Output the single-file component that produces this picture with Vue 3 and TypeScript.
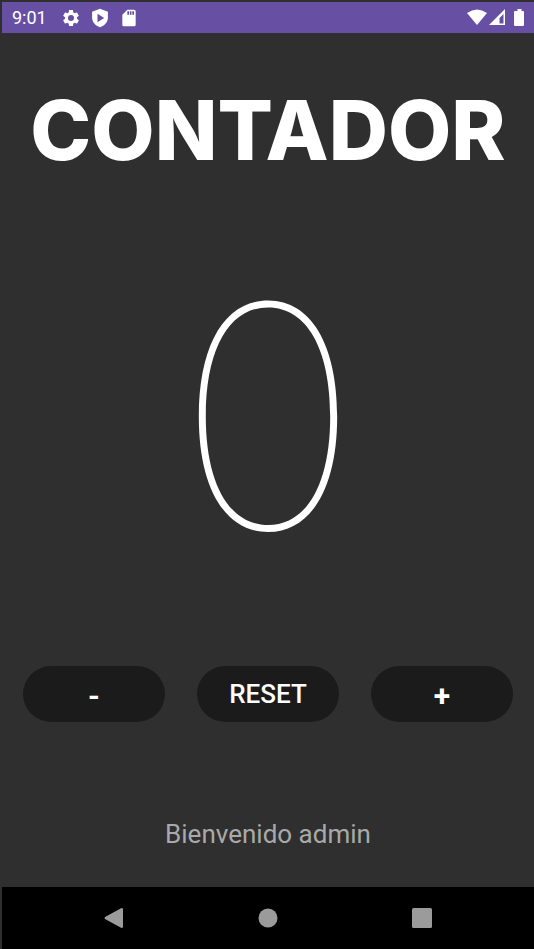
<script setup lang="ts">
import { ref } from 'vue'

const count = ref<number>(0)
const user = 'admin'
</script>

<template>
  <div class="device">
    <header class="status">
      <span class="clock">9:01</span>
      <svg class="icon" viewBox="0 0 24 24" aria-hidden="true">
        <path d="M19.14 12.94c.04-.3.06-.61.06-.94 0-.32-.02-.64-.07-.94l2.03-1.58a.49.49 0 0 0 .12-.61l-1.92-3.32a.488.488 0 0 0-.59-.22l-2.39.96c-.5-.38-1.03-.7-1.62-.94l-.36-2.54a.484.484 0 0 0-.48-.41h-3.84c-.24 0-.43.17-.47.41l-.36 2.54c-.59.24-1.13.57-1.62.94l-2.39-.96c-.22-.08-.47 0-.59.22L2.74 8.87c-.12.21-.08.47.12.61l2.03 1.58c-.05.3-.09.63-.09.94s.02.64.07.94l-2.03 1.58a.49.49 0 0 0-.12.61l1.92 3.32c.12.22.37.29.59.22l2.39-.96c.5.38 1.03.7 1.62.94l.36 2.54c.05.24.24.41.48.41h3.84c.24 0 .44-.17.47-.41l.36-2.54c.59-.24 1.13-.56 1.62-.94l2.39.96c.22.08.47 0 .59-.22l1.92-3.32a.49.49 0 0 0-.12-.61l-2.01-1.58zM12 15.6a3.6 3.6 0 1 1 0-7.2 3.6 3.6 0 0 1 0 7.2z" />
      </svg>
      <svg class="icon" viewBox="0 0 24 24" aria-hidden="true">
        <path fill-rule="evenodd" d="M12 1 2.500 4.500v7c0 5.500 4 10 9.500 11.500 5.500-1.500 9.500-6 9.500-11.500v-7zM9 7l8 5-8 5z" />
      </svg>
      <svg class="icon" viewBox="0 0 24 24" aria-hidden="true">
        <path d="M18 2h-8L4 8v12c0 1.100.9 2 2 2h12c1.100 0 2-.9 2-2V4c0-1.100-.9-2-2-2zm-6 6h-2V4h2v4zm3 0h-2V4h2v4zm3 0h-2V4h2v4z" />
      </svg>
      <span class="spacer"></span>
      <svg class="signal" viewBox="0 0 58 18" aria-hidden="true">
        <path d="M0 4Q10-3 20 4L10 16z" />
        <path fill-rule="evenodd" d="M38 0v16H22zM36.500 5v9.500h-4V9z" />
        <path d="M48.500 2h2V0h4v2h1.500q1 0 1 1v13q0 1-1 1h-8q-1 0-1-1V3q0-1 1-1z" />
      </svg>
    </header>

    <main class="screen">
      <h1 class="title">CONTADOR</h1>
      <output class="count">{{ count }}</output>
      <div class="actions">
        <button type="button" class="step" @click="count--">-</button>
        <button type="button" @click="count = 0">RESET</button>
        <button type="button" class="step" @click="count++">+</button>
      </div>
      <p class="welcome">Bienvenido {{ user }}</p>
    </main>

    <nav class="nav">
      <button type="button" aria-label="Atrás">
        <svg viewBox="0 0 20 20"><path d="M1 9 17.500 0Q19 0 19 1V19Q19 20 17.500 20L1 11Q0 10 1 9z" /></svg>
      </button>
      <button type="button" aria-label="Inicio">
        <svg viewBox="0 0 20 20"><circle cx="10" cy="10" r="9.500" /></svg>
      </button>
      <button type="button" aria-label="Recientes">
        <svg viewBox="0 0 20 20"><rect width="20" height="20" rx="1.500" /></svg>
      </button>
    </nav>
  </div>
</template>

<style>
body {
  background: #2f2f2f;
}
</style>

<style scoped>
.device {
  box-sizing: border-box;
  min-height: 100vh;
  padding: 2px 0 0 2px;
  display: flex;
  flex-direction: column;
  background: #2f2f2f;
  color: #fff;
  font-family: Roboto, sans-serif;
}
.status {
  display: flex;
  align-items: center;
  height: 31px;
  padding: 0 9px 0 10px;
  background: #6750a4;
}
.clock {
  width: 40px;
  margin-right: 9px;
  font-size: 18px;
  line-height: 32px;
}
.icon {
  width: 20px;
  height: 20px;
  margin-right: 9px;
  fill: #fff;
}
.spacer {
  flex: 1;
}
.signal {
  width: 58px;
  height: 18px;
  fill: #fff;
}
.screen {
  flex: 1;
  display: flex;
  flex-direction: column;
  align-items: center;
}
.title {
  margin: 48px 0 0;
  font-family: Inter, sans-serif;
  font-size: 82px;
  font-weight: 800;
  line-height: 100px;
}
.count {
  margin-top: 56px;
  font-family: Inter, sans-serif;
  font-size: 310px;
  font-weight: 100;
  line-height: 360px;
}
.actions {
  align-self: stretch;
  display: grid;
  grid-template-columns: repeat(3, 1fr);
  gap: 32px;
  margin-top: 69px;
  padding: 0 21px;
}
.actions button {
  height: 56px;
  padding: 0;
  border: 0;
  border-radius: 28px;
  background: #1b1b1b;
  color: #fff;
  font-family: inherit;
  font-size: 26px;
  font-weight: 500;
}
.actions .step {
  padding-top: 2px;
  font-size: 30px;
  font-weight: 700;
}
.welcome {
  margin: 94px 0 32px;
  font-size: 26px;
  line-height: 36px;
  color: #a9a9a9;
}
.nav {
  display: flex;
  justify-content: center;
  gap: 134px;
  height: 62px;
  background: #000;
}
.nav button {
  display: flex;
  align-items: center;
  padding: 0;
  border: 0;
  background: none;
}
.nav svg {
  width: 20px;
  height: 20px;
  fill: #9b9b9b;
}
</style>
